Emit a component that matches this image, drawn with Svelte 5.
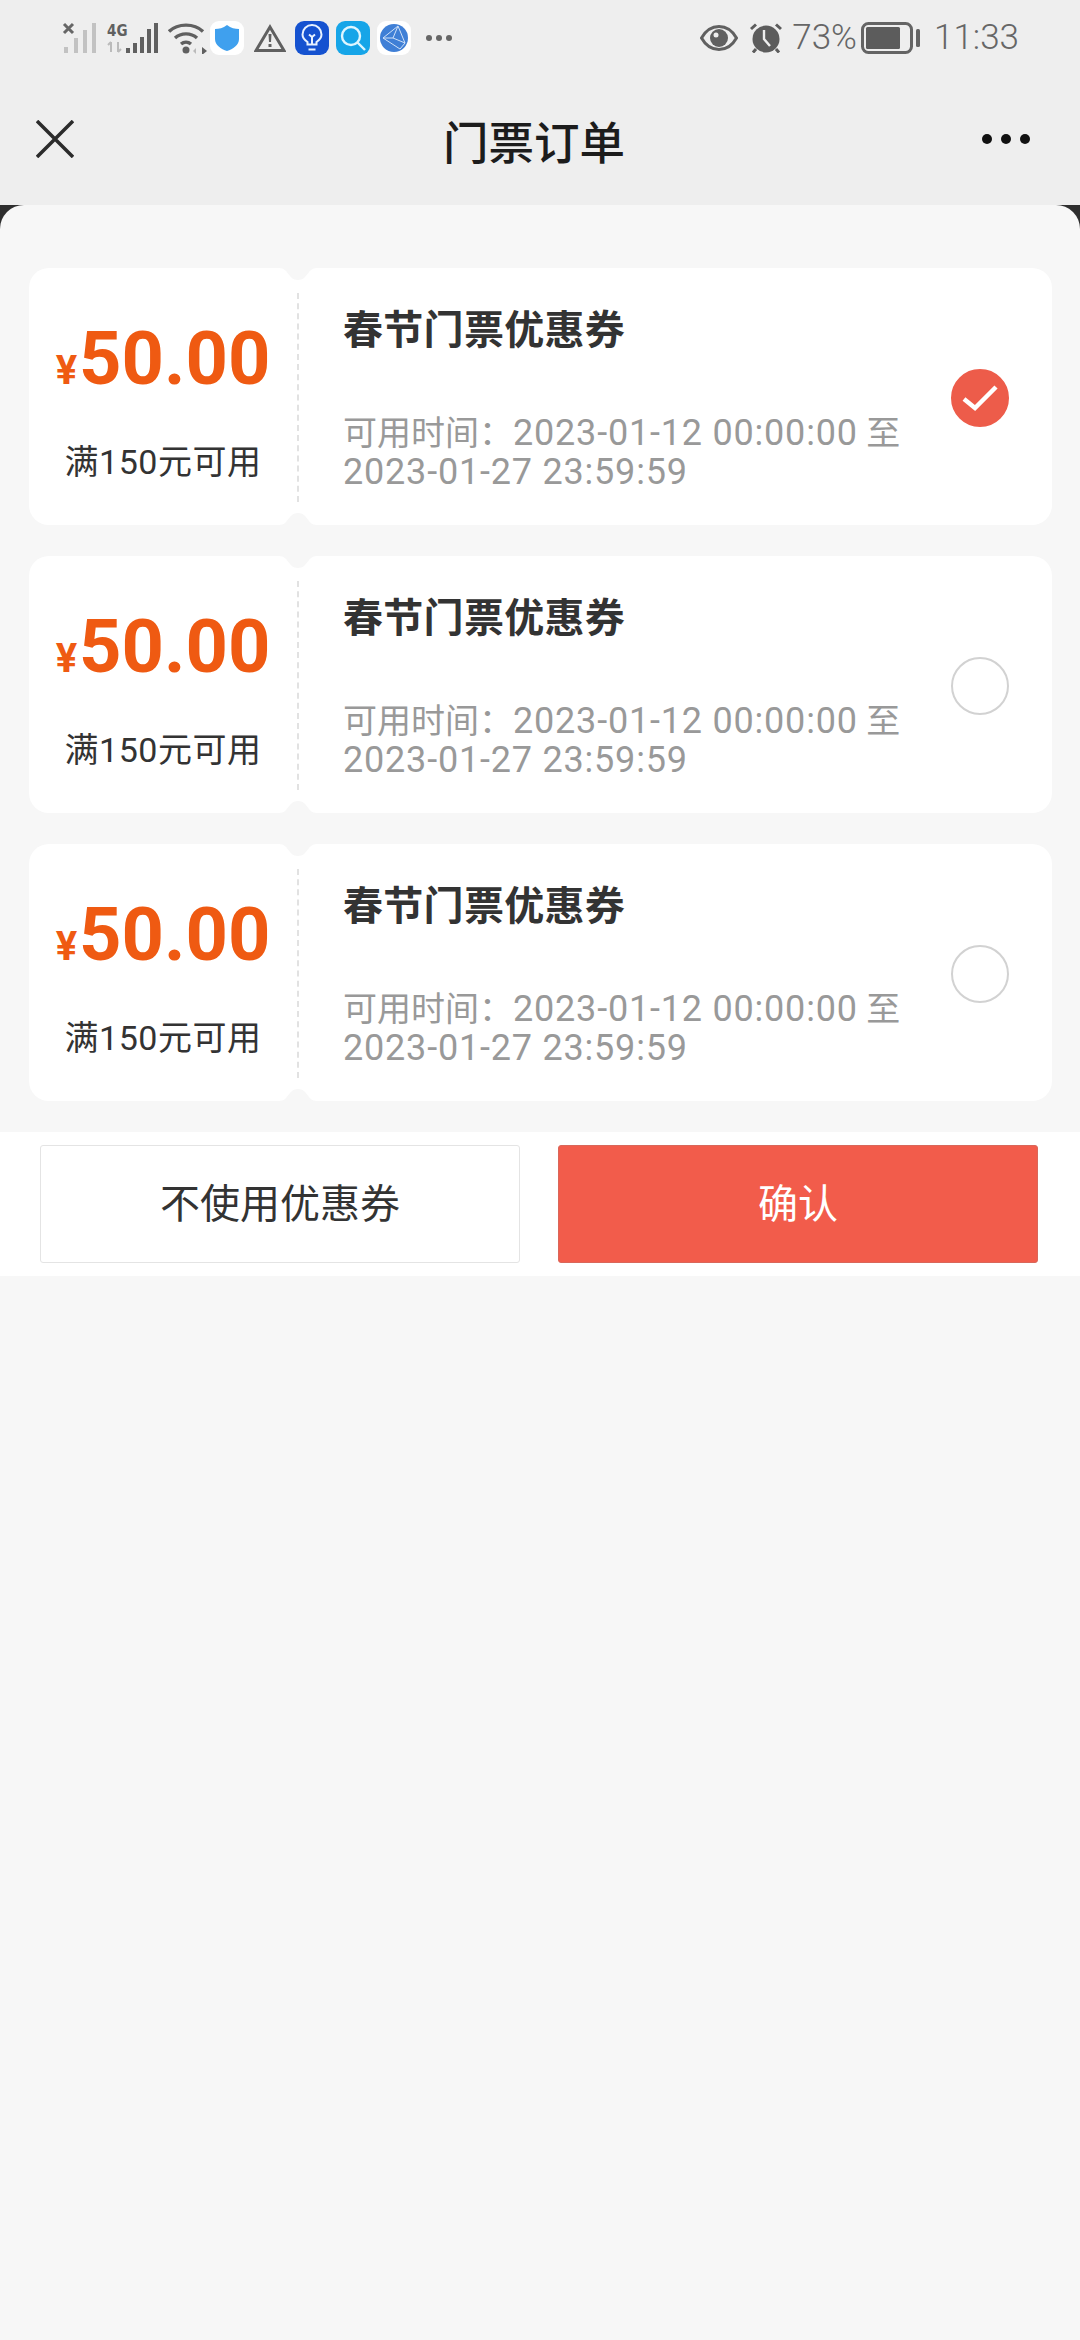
<script lang="ts">
  interface Coupon {
    amount: string
    limit: string
    title: string
    from: string
    to: string
    checked: boolean
  }

  const coupons: Coupon[] = [
    { amount: '50.00', limit: '满150元可用', title: '春节门票优惠券', from: '2023-01-12 00:00:00', to: '2023-01-27 23:59:59', checked: true },
    { amount: '50.00', limit: '满150元可用', title: '春节门票优惠券', from: '2023-01-12 00:00:00', to: '2023-01-27 23:59:59', checked: false },
    { amount: '50.00', limit: '满150元可用', title: '春节门票优惠券', from: '2023-01-12 00:00:00', to: '2023-01-27 23:59:59', checked: false },
  ]
</script>

{#snippet notch(cls: string)}
  <svg class="notch {cls}" width="38" height="13" viewBox="0 0 38 13" aria-hidden="true">
    <path d="M0 0H38C28 0 29 12 19 12C9 12 10 0 0 0Z" fill="#f7f7f7" />
  </svg>
{/snippet}

<div class="page">
  <header class="top">
    <div class="status">
      <div class="status-left">
        <svg class="sim1" width="34" height="32" viewBox="0 0 34 32" aria-hidden="true">
          <path d="M2 2l9 9M11 2l-9 9" stroke="#666" stroke-width="3" />
          <g fill="#c2c2c2">
            <rect x="2" y="25" width="4" height="6" />
            <rect x="12" y="16" width="4" height="15" />
            <rect x="21" y="8" width="4" height="23" />
            <rect x="30" y="1" width="4" height="30" />
          </g>
        </svg>
        <svg class="sim2" width="51" height="32" viewBox="0 0 51 32" aria-hidden="true">
          <text x="0" y="14" class="net">4G</text>
          <path d="M4 20v10M1 23l3-3M11 20v10M11 30l3-3" stroke="#bbb" stroke-width="2" fill="none" />
          <g fill="#606060">
            <rect x="19" y="26" width="4" height="5" />
            <rect x="26" y="21" width="4" height="10" />
            <rect x="33" y="15" width="4" height="16" />
            <rect x="40" y="7" width="4" height="24" />
            <rect x="47" y="1" width="4" height="30" />
          </g>
        </svg>
        <svg class="wifi" width="39" height="32" viewBox="0 0 39 32" aria-hidden="true">
          <g fill="none" stroke="#606060" stroke-width="3.4">
            <path d="M1 9.5C10 1 26 1 35 9.5" />
            <path d="M7 16C13 10.500 23 10.500 29 16" />
            <path d="M13 22C16 19.500 20 19.500 23 22" />
          </g>
          <circle cx="18" cy="28" r="3.500" fill="#606060" />
          <path d="M28 26l-3 3 3 3z" fill="#bbb" />
          <path d="M34 25l5 4-5 4z" fill="#606060" />
        </svg>
        <span class="tile tile-white tile-shield">
          <svg width="24" height="26" viewBox="0 0 24 26" aria-hidden="true">
            <path d="M12 0C16 3 20 4 24 4V14C24 20 18 24 12 26C6 24 0 20 0 14V4C4 4 8 3 12 0Z" fill="#3fa0ee" />
          </svg>
        </span>
        <svg class="warn" width="32" height="28" viewBox="0 0 32 28" aria-hidden="true">
          <path d="M16 3L30 26.500H2Z" fill="none" stroke="#606060" stroke-width="3" stroke-linejoin="miter" />
          <path d="M14.500 10h3l-.5 8h-2zM14.500 20h3v3h-3z" fill="#606060" />
        </svg>
        <span class="tile tile-bulb">
          <svg width="22" height="28" viewBox="0 0 22 28" aria-hidden="true">
            <g fill="none" stroke="#e8f2ff" stroke-width="2">
              <path d="M6.500 20.500V18C3.500 16 1.500 13.500 1.500 10.500a9.500 9.500 0 0 1 19 0c0 3-2 5.500-5 7.500v2.500z" />
              <path d="M7.500 25.500h7M11 20v-7" />
              <path d="M8 10.500l3 2.500 3-2.500" />
            </g>
          </svg>
        </span>
        <span class="tile tile-search">
          <svg width="26" height="26" viewBox="0 0 26 26" aria-hidden="true">
            <circle cx="11" cy="11" r="9" fill="none" stroke="#dff6ff" stroke-width="2.400" />
            <path d="M17 17l8 8" stroke="#dff6ff" stroke-width="2.400" />
          </svg>
        </span>
        <span class="tile tile-white tile-globe">
          <svg width="28" height="28" viewBox="0 0 28 28" aria-hidden="true">
            <circle cx="14" cy="14" r="14" fill="#3f7fd6" />
            <path d="M18 2L3 14l17 11M18 2l7 17-5 6M18 2L13 14H3M13 14l12 5" fill="none" stroke="#cfe1f8" stroke-width="1" />
          </svg>
        </span>
        <span class="more-small"><i></i><i></i><i></i></span>
      </div>
      <div class="status-right">
        <svg class="eye" width="38" height="26" viewBox="0 0 38 26" aria-hidden="true">
          <path d="M1.500 13C6 5 12 1.500 19 1.500S32 5 36.500 13C32 21 26 24.500 19 24.500S6 21 1.500 13Z" fill="none" stroke="#606060" stroke-width="3" />
          <circle cx="19" cy="13" r="9" fill="#606060" />
          <circle cx="16" cy="10" r="2.500" fill="#eee" />
        </svg>
        <svg class="alarm" width="34" height="30" viewBox="0 0 34 30" aria-hidden="true">
          <circle cx="17" cy="16" r="13.500" fill="#5c5c5c" />
          <path d="M2 6L7 1.500M32 6L27 1.500M7 26l-3 3.500M27 26l3 3.500" stroke="#5c5c5c" stroke-width="3" />
          <path d="M15 7v9l6 7" fill="none" stroke="#eee" stroke-width="2.400" />
        </svg>
        <span class="pct">73%</span>
        <svg class="battery" width="59" height="32" viewBox="0 0 59 32" aria-hidden="true">
          <rect x="1.500" y="1.500" width="49" height="29" rx="6" fill="none" stroke="#646464" stroke-width="3" />
          <rect x="5" y="5" width="34" height="22" rx="1.500" fill="#5c5c5c" />
          <rect x="55" y="7" width="4" height="18" rx="1.500" fill="#646464" />
        </svg>
        <span class="time">11:33</span>
      </div>
    </div>
    <nav class="nav">
      <svg class="close" width="38" height="38" viewBox="0 0 38 38" aria-hidden="true">
        <path d="M1 1l36 36M37 1L1 37" stroke="#2b2b2b" stroke-width="3.500" />
      </svg>
      <h1>门票订单</h1>
      <span class="more"><i></i><i></i><i></i></span>
    </nav>
  </header>

  <div class="sheet-back">
    <main class="sheet">
      <section class="list">
        {#each coupons as c}
          <article class="coupon">
            {@render notch('notch-top')}
            {@render notch('notch-bottom')}
            <div class="stub">
              <div class="price"><span class="yen">¥</span>{c.amount}</div>
              <div class="limit">{c.limit}</div>
            </div>
            <div class="info">
              <div class="title">{c.title}</div>
              <div class="date">
                <div>可用时间：<span class="num">{c.from}</span> 至</div>
                <div><span class="num">{c.to}</span></div>
              </div>
            </div>
            {#if c.checked}
              <span class="radio radio-on">
                <svg width="36" height="28" viewBox="0 0 36 28" aria-hidden="true">
                  <path d="M2 15l11 9L34 3" fill="none" stroke="#fff" stroke-width="4.500" />
                </svg>
              </span>
            {:else}
              <span class="radio"></span>
            {/if}
          </article>
        {/each}
      </section>
      <footer class="actions">
        <button class="btn btn-plain">不使用优惠券</button>
        <button class="btn btn-primary">确认</button>
      </footer>
    </main>
  </div>
</div>

<style>
  :global(body) {
    margin: 0;
    background: #f7f7f7;
    font-family: Roboto, "Noto Sans CJK SC", sans-serif;
  }
  .page {
    width: 1080px;
    height: 2340px;
    display: flex;
    flex-direction: column;
    overflow: hidden;
  }
  .top {
    height: 205px;
    background: #eeeeee;
    flex: none;
  }
  .status {
    height: 76px;
    padding: 0 61px 0 62px;
    display: flex;
    justify-content: space-between;
    align-items: flex-start;
    box-sizing: border-box;
  }
  .status-left,
  .status-right {
    display: flex;
    align-items: center;
    height: 76px;
  }
  .sim1 { margin-top: -1px; }
  .sim2 { margin-left: 11px; margin-top: -1px; }
  .net {
    font-family: "DejaVu Sans Condensed", "DejaVu Sans", sans-serif;
    font-weight: 700;
    font-size: 15px;
    fill: #606060;
  }
  .wifi { margin-left: 10px; margin-top: -1px; }
  .tile {
    width: 34px;
    height: 34px;
    border-radius: 9px;
    display: flex;
    align-items: center;
    justify-content: center;
    flex: none;
  }
  .tile-white { background: #fff; }
  .tile-shield { margin-left: 3px; }
  .tile-bulb { background: #1552d0; margin-left: 9px; }
  .tile-search { background: #16a5e8; margin-left: 7px; }
  .tile-globe { margin-left: 7px; }
  .warn { margin-left: 10px; }
  .more-small {
    display: flex;
    gap: 4px;
    margin-left: 15px;
  }
  .more-small i {
    width: 6px;
    height: 6px;
    border-radius: 50%;
    background: #666;
  }
  .status-right { color: #666; }
  .alarm { margin-left: 11px; }
  .pct,
  .time {
    font-size: 35px;
    font-weight: 300;
    line-height: 76px;
  }
  .pct { margin-left: 9px; }
  .battery { margin-left: 4px; }
  .time { margin-left: 14px; }

  .nav {
    height: 129px;
    position: relative;
    display: flex;
    align-items: center;
    justify-content: space-between;
    padding: 0 50px 3px 36px;
    box-sizing: border-box;
  }
  .nav h1 {
    position: absolute;
    left: 0;
    right: 0;
    top: 37px;
    margin: 0;
    text-align: center;
    font-size: 45.5px;
    line-height: 64px;
    font-weight: 500;
    color: #1c1c1c;
    transform: translateX(-6px);
  }
  .more {
    display: flex;
    gap: 9px;
  }
  .more i {
    width: 10px;
    height: 10px;
    border-radius: 50%;
    background: #111;
  }

  .sheet-back {
    flex: 1;
    background: #2e2e2e;
  }
  .sheet {
    height: 100%;
    background: #f7f7f7;
    border-radius: 24px 24px 0 0;
    padding-top: 63px;
    box-sizing: border-box;
  }
  .list {
    display: flex;
    flex-direction: column;
    gap: 31px;
    padding: 0 28px 31px 29px;
  }
  .coupon {
    position: relative;
    height: 257px;
    background: #fff;
    border-radius: 20px;
    display: flex;
    align-items: center;
  }
  .notch {
    position: absolute;
    left: 250px;
  }
  .notch-top { top: 0; }
  .notch-bottom { bottom: 0; transform: scaleY(-1); }
  .stub {
    width: 270px;
    height: 209px;
    margin-top: 2px;
    padding-top: 26px;
    box-sizing: border-box;
    border-right: 2px dashed #e2e2e2;
    text-align: center;
    flex: none;
  }
  .price {
    font-size: 74px;
    line-height: 80px;
    font-weight: 700;
    color: #ef5a12;
    white-space: nowrap;
  }
  .yen {
    font-size: 40px;
    margin-right: 2px;
  }
  .limit {
    margin-top: 31px;
    font-size: 34px;
    line-height: 40px;
    letter-spacing: 0.5px;
    color: #333;
  }
  .info {
    flex: 1;
    height: 257px;
    padding: 38px 0 0 44px;
    box-sizing: border-box;
  }
  .title {
    font-size: 40px;
    line-height: 50px;
    font-weight: 700;
    letter-spacing: 0.3px;
    color: #333;
  }
  .date {
    margin-top: 58px;
    font-size: 34px;
    line-height: 39px;
    color: #999;
    white-space: nowrap;
  }
  .num {
    font-size: 36px;
    letter-spacing: 0.8px;
  }
  .radio {
    width: 58px;
    height: 58px;
    margin: 3px 43px 0 0;
    border-radius: 50%;
    border: 2px solid #d2d2d2;
    box-sizing: border-box;
    display: flex;
    align-items: center;
    justify-content: center;
    flex: none;
  }
  .radio-on {
    background: #ed5c4a;
    border-color: #ed5c4a;
  }

  .actions {
    background: #fff;
    height: 144px;
    padding: 13px 42px 13px 40px;
    box-sizing: border-box;
    display: flex;
    gap: 38px;
  }
  .btn {
    flex: 1;
    font-family: inherit;
    font-size: 40px;
    border-radius: 3px;
    padding: 0 0 6px;
    cursor: pointer;
  }
  .btn-plain {
    background: #fff;
    border: 1px solid #e4e4e4;
    color: #333;
  }
  .btn-primary {
    background: #f25c4b;
    border: 1px solid #d9675a;
    color: #fff;
  }
</style>
